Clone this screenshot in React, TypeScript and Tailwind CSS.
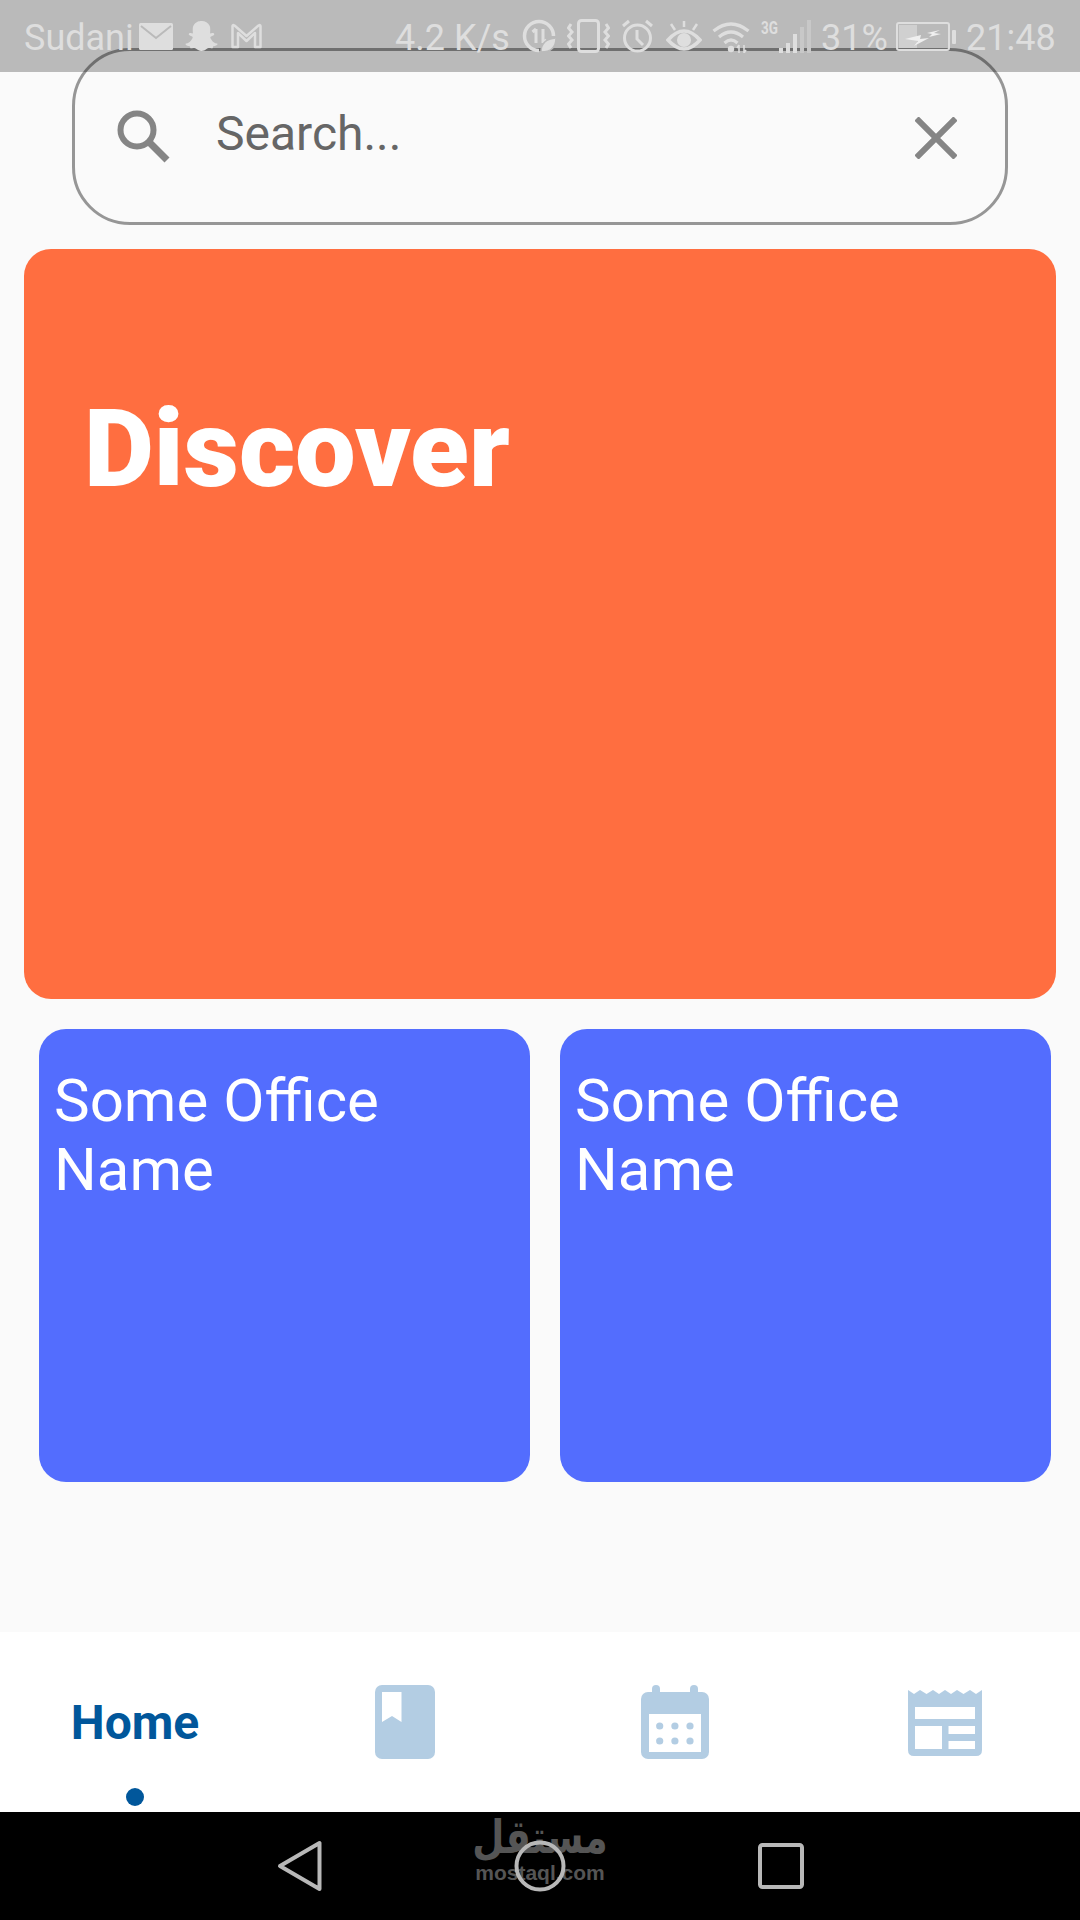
import { FaSnapchatGhost } from 'react-icons/fa'

const statusText = "font-['Roboto',sans-serif] text-[36px] leading-none text-[#dedede] mt-[3px] shrink-0 whitespace-nowrap"

function MailIcon() {
  return (
    <svg width="34" height="27" viewBox="0 0 34 27" className="ml-[7px] shrink-0">
      <rect width="34" height="27" rx="1.5" fill="#dedede" />
      <path d="M2 3 L17 15 L32 3" fill="none" stroke="#bababa" strokeWidth="2" />
    </svg>
  )
}

function GmailIcon() {
  return (
    <svg width="33" height="26" viewBox="0 0 33 26" className="ml-[12px] shrink-0">
      <path
        d="M2.5 24 V3 Q2.5 1.5 4.5 2.5 L16.5 13 L28.5 2.5 Q30.5 1.5 30.5 3 V24 H25 V10 L16.5 18 L8 10 V24 Z"
        fill="none"
        stroke="#dedede"
        strokeWidth="2.5"
        strokeLinejoin="round"
      />
    </svg>
  )
}

function DataSaverIcon() {
  return (
    <svg width="34" height="34" viewBox="0 0 34 34" className="ml-[14px] shrink-0">
      <path d="M17 31.5 A14.5 14.5 0 1 1 31.5 17" fill="none" stroke="#dedede" strokeWidth="3.5" />
      <path d="M14 10 V24 M14 10 L10.5 13 M21 10 V24 M21 24 L24.5 21" fill="none" stroke="#dedede" strokeWidth="3" />
      <path d="M19 33 Q19 20 34 19 Q34 33 19 33 Z" fill="#dedede" stroke="#bababa" strokeWidth="1.5" />
    </svg>
  )
}

function VibrateIcon() {
  return (
    <svg width="43" height="34" viewBox="0 0 43 34" className="ml-[11px] shrink-0">
      <rect x="11.5" y="1.5" width="20" height="31" rx="3" fill="none" stroke="#dedede" strokeWidth="3" />
      <path
        d="M4 5 L1.5 9 L5 13 L1.5 17 L5 21 L1.5 25 L4 29 M39 5 L41.5 9 L38 13 L41.5 17 L38 21 L41.5 25 L39 29"
        fill="none"
        stroke="#dedede"
        strokeWidth="3"
      />
    </svg>
  )
}

function AlarmIcon() {
  return (
    <svg width="33" height="34" viewBox="0 0 33 34" className="ml-[11px] shrink-0">
      <circle cx="16.5" cy="19" r="13" fill="none" stroke="#dedede" strokeWidth="3" />
      <path d="M16 11 V20 L22 26" fill="none" stroke="#dedede" strokeWidth="3" />
      <path d="M2 7 L8 2 M31 7 L25 2" fill="none" stroke="#dedede" strokeWidth="3" />
    </svg>
  )
}

function EyeIcon() {
  return (
    <svg width="36" height="33" viewBox="0 0 36 33" className="ml-[12px] shrink-0">
      <path d="M2 20 Q18 2 34 20 Q18 38 2 20 Z" fill="none" stroke="#dedede" strokeWidth="3.5" />
      <circle cx="18" cy="20" r="7" fill="#dedede" />
      <path d="M18 1 V7 M5 4 L9 10 M31 4 L27 10" fill="none" stroke="#dedede" strokeWidth="2.5" />
    </svg>
  )
}

function WifiIcon() {
  return (
    <svg width="38" height="33" viewBox="0 0 38 33" className="ml-[10px] shrink-0">
      <path
        d="M1.5 11 Q19 -3 36.5 11 M7 17 Q19 7 31 17 M12.5 23 Q19 17 25.500 23"
        fill="none"
        stroke="#dedede"
        strokeWidth="3.2"
      />
      <circle cx="19" cy="29" r="3.2" fill="#dedede" />
      <path d="M27 25 V33 M27 25 L25 28 M32 25 V33 M32 33 L34 30" fill="none" stroke="#dedede" strokeWidth="1.6" />
    </svg>
  )
}

function SignalIcon() {
  return (
    <div className="relative ml-[11px] w-[53px] h-[33px] shrink-0">
      <span className="absolute left-0 top-[-1px] font-['Roboto',sans-serif] font-bold text-[18px] leading-none text-[#dedede] scale-x-75 origin-left">
        3G
      </span>
      <svg width="53" height="33" viewBox="0 0 53 33" className="absolute inset-0">
        <rect x="18" y="28" width="4" height="5" fill="#dedede" />
        <rect x="25" y="23" width="4" height="10" fill="#dedede" />
        <rect x="32" y="14" width="4" height="19" fill="#dedede" />
        <rect x="39" y="7" width="4" height="26" fill="#c8c8c8" />
        <rect x="46" y="0" width="4" height="33" fill="#c8c8c8" />
      </svg>
    </div>
  )
}

function BatteryIcon() {
  return (
    <svg width="60" height="29" viewBox="0 0 60 29" className="ml-[11px] shrink-0">
      <rect x="1" y="1" width="52" height="27" rx="2" fill="none" stroke="#dedede" strokeWidth="2" />
      <rect x="3" y="3" width="18" height="23" fill="#d0d0d0" />
      <rect x="56" y="8" width="4" height="14" rx="1" fill="#dedede" />
      <path d="M9 17 L25 13 L24 17 L33 16 L18 24 L22 19 Z M31 11 L44 8 L38 11 L45 12 L33 15 L36 12 Z" fill="#efefef" />
    </svg>
  )
}

function StatusBar() {
  return (
    <div className="h-[72px] bg-[#bababa] shrink-0">
      <div className="relative z-10 flex items-center h-full pl-[24px]">
        <span className={statusText + ' w-[108px]'}>Sudani</span>
        <MailIcon />
        <FaSnapchatGhost className="ml-[12px] shrink-0 text-[#dedede] w-[33px] h-[32px]" />
        <GmailIcon />
        <span className={statusText + ' ml-[132px] w-[113px]'}>4.2 K/s</span>
        <DataSaverIcon />
        <VibrateIcon />
        <AlarmIcon />
        <EyeIcon />
        <WifiIcon />
        <SignalIcon />
        <span className={statusText + ' ml-[7px] w-[64px]'}>31%</span>
        <BatteryIcon />
        <span className={statusText + ' ml-[10px] w-[89px]'}>21:48</span>
      </div>
    </div>
  )
}

function SearchBox() {
  return (
    <div className="relative z-0 mt-[-24px] ml-[72px] w-[936px] h-[177px] rounded-[58px] border-[3px] border-black/40 flex items-center shrink-0">
      <svg width="54" height="54" viewBox="0 0 54 54" className="ml-[42px] shrink-0">
        <circle cx="20" cy="20" r="16.500" fill="none" stroke="#858585" strokeWidth="6" />
        <path d="M32 32 L50 50" stroke="#858585" strokeWidth="7" />
      </svg>
      <span className="ml-[45px] mb-[6px] font-['Roboto',sans-serif] text-[48px] leading-none text-[#666666]">
        Search...
      </span>
      <svg width="42" height="42" viewBox="0 0 42 42" className="ml-auto mr-[48px] mt-[2px] shrink-0">
        <path d="M1.500 1.500 L40.500 40.500 M40.500 1.500 L1.500 40.500" stroke="#858585" strokeWidth="6" />
      </svg>
    </div>
  )
}

function OfficeCard() {
  return (
    <div className="h-[453px] bg-[#536dfe] rounded-[27px] pl-[15px] pr-[16px] pt-[37px] font-['Roboto',sans-serif] text-[60px] leading-[69px] text-white">
      Some Office Name
    </div>
  )
}

function BookIcon() {
  return (
    <svg width="60" height="74" viewBox="0 0 60 74">
      <rect width="60" height="74" rx="7" fill="#b3cde3" />
      <path d="M7 7 H26.500 V37 L17 31 L7 37 Z" fill="#ffffff" />
    </svg>
  )
}

function CalendarIcon() {
  return (
    <svg width="68" height="74" viewBox="0 0 68 74">
      <rect x="11" y="0" width="8" height="14" rx="4" fill="#b3cde3" />
      <rect x="49" y="0" width="8" height="14" rx="4" fill="#b3cde3" />
      <rect x="0" y="7" width="68" height="67" rx="7" fill="#b3cde3" />
      <rect x="8" y="29" width="52" height="38" fill="#ffffff" />
      {[18.7, 33.900, 49].map((x) => (
        <g key={x}>
          <circle cx={x} cy="41" r="3.600" fill="#b3cde3" />
          <circle cx={x} cy="56" r="3.600" fill="#b3cde3" />
        </g>
      ))}
    </svg>
  )
}

function NewsIcon() {
  return (
    <svg width="74" height="66" viewBox="0 0 74 66">
      <path
        d="M0 0 L6 4 L12 0 L18.500 4 L25 0 L31 4 L37 0 L43 4 L49 0 L55.500 4 L62 0 L68 4 L74 0 V60 Q74 66 68 66 H6 Q0 66 0 60 Z"
        fill="#b3cde3"
      />
      <rect x="7" y="17" width="60" height="12" fill="#ffffff" />
      <rect x="7" y="36" width="27" height="23" fill="#ffffff" />
      <rect x="40.500" y="36" width="26.500" height="8" fill="#ffffff" />
      <rect x="40.500" y="51" width="26.500" height="8" fill="#ffffff" />
    </svg>
  )
}

function BottomNav() {
  return (
    <div className="h-[180px] bg-white grid grid-cols-4 shrink-0">
      <div className="flex flex-col items-center pt-[67px]">
        <span className="font-['Roboto',sans-serif] font-bold text-[48px] leading-none text-[#01579b]">Home</span>
        <span className="mt-[41px] w-[18px] h-[18px] rounded-full bg-[#01579b]" />
      </div>
      <div className="flex justify-center pt-[53px]">
        <div><BookIcon /></div>
      </div>
      <div className="flex justify-center pt-[53px]">
        <div><CalendarIcon /></div>
      </div>
      <div className="flex justify-center pt-[58px]">
        <div><NewsIcon /></div>
      </div>
    </div>
  )
}

function SystemNav() {
  return (
    <div className="relative h-[108px] bg-black flex items-center shrink-0">
      {/* watermark sits over the nav bar */}
      <div className="absolute left-[474px] top-[3px] w-[132px] flex flex-col items-center text-[#555555]">
        <span dir="rtl" className="font-['DejaVu_Sans',sans-serif] font-bold text-[37px] leading-[46px] scale-y-[1.25]">
          مستقل
        </span>
        <span className="font-['Liberation_Sans',sans-serif] font-bold text-[21px] leading-[22px] mt-[1px]">
          mostaql.com
        </span>
      </div>
      <svg width="46" height="52" viewBox="0 0 46 52" className="relative ml-[277px] shrink-0">
        <path d="M42.500 3 V49 L3 26 Z" fill="none" stroke="#b8b8b8" strokeWidth="4" strokeLinejoin="round" />
      </svg>
      <svg width="52" height="52" viewBox="0 0 52 52" className="relative ml-[191px] shrink-0">
        <circle cx="26" cy="26" r="23.500" fill="none" stroke="#b8b8b8" strokeWidth="4" />
      </svg>
      <svg width="46" height="46" viewBox="0 0 46 46" className="relative ml-[192px] shrink-0">
        <rect x="2" y="2" width="42" height="42" rx="2.500" fill="none" stroke="#b8b8b8" strokeWidth="4" />
      </svg>
    </div>
  )
}

export default function App() {
  return (
    <div className="w-[1080px] h-[1920px] flex flex-col bg-[#fafafa] overflow-hidden">
      <StatusBar />
      <SearchBox />

      <div className="mt-[24px] mx-[24px] h-[750px] bg-[#ff6e40] rounded-[27px] pl-[60px] pt-[146px] shrink-0">
        <h1 className="font-['Roboto',sans-serif] font-black text-[108px] leading-none text-white">Discover</h1>
      </div>

      <div className="mt-[30px] ml-[39px] mr-[29px] grid grid-cols-2 gap-[30px] shrink-0">
        <OfficeCard />
        <OfficeCard />
      </div>

      <div className="flex-1" />
      <BottomNav />
      <SystemNav />
    </div>
  )
}
